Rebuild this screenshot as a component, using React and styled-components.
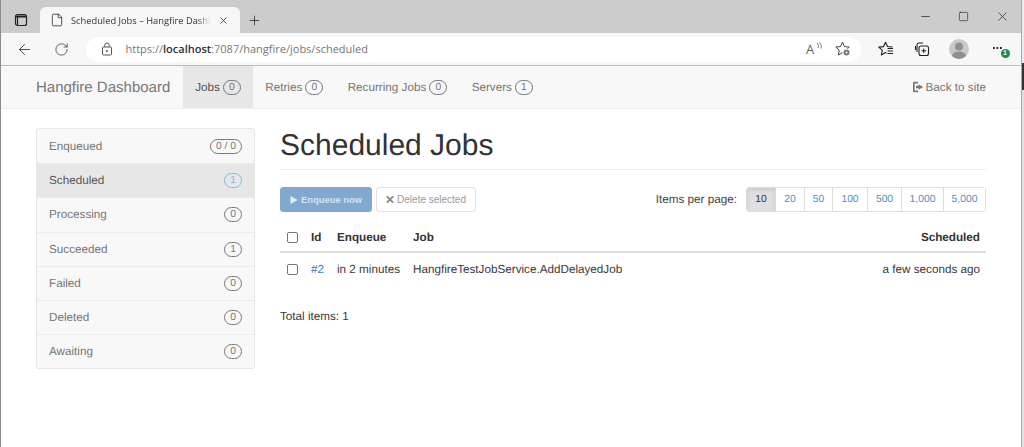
import React from "react";
import styled, { createGlobalStyle } from "styled-components";
import { X, Plus, ArrowLeft, RotateCw, File, Minus, Square } from "lucide-react";

const Global = createGlobalStyle`
  html, body { margin: 0; padding: 0; background: #fff; }
  body { font-family: "Liberation Sans", Arial, sans-serif; font-size: 11.7px; color: #3a3a3a; text-rendering: geometricPrecision; }
`;

const Frame = styled.div`
  width: 1024px; height: 447px; display: flex; overflow: hidden; background: #fff;
`;
const Win = styled.div`
  width: 1020px; height: 447px; display: flex; flex-direction: column;
  border-left: 1px solid #8c8c8c; border-right: 1px solid #a8a8a8; flex: none;
`;
const RightGap = styled.div`
  flex: 1; background: linear-gradient(#ececec 0 63px, #333 63px 90px, #e0e0e0 90px 100%);
`;
const TabStrip = styled.div`
  height: 33px; background: #cccccc; display: flex; align-items: flex-end; flex: none;
`;
const TabSquare = styled.div`
  width: 39px; height: 33px; display: flex; align-items: center; justify-content: center; padding-top: 7px; box-sizing: border-box; color: #222;
`;
const Tab = styled.div`
  width: 200px; height: 26px; box-sizing: border-box; background: #f7f7f7; border-radius: 6px 6px 0 0;
  display: flex; align-items: center; padding: 0 11px 0 10px; gap: 7px; color: #222;
`;
const TabTitle = styled.span`
  flex: 1; font-family: "Open Sans", sans-serif; font-size: 9.3px; white-space: nowrap; overflow: hidden; color: #333;
  -webkit-mask-image: linear-gradient(90deg, #000 90%, transparent);
`;
const NewTab = styled.div`
  width: 28px; height: 26px; display: flex; align-items: center; justify-content: center; color: #222;
`;
const WinCtrls = styled.div`
  margin-left: auto; height: 33px; display: flex; align-items: center; gap: 26px; padding-right: 11px; color: #222;
`;
const Toolbar = styled.div`
  height: 32px; flex: none; background: #f7f7f7; border-bottom: 1px solid #bdbdbd; display: flex; align-items: center;
  padding: 0 0 0 14px; box-sizing: content-box;
`;
const NavIcon = styled.div`
  width: 18px; display: flex; justify-content: center; margin-right: ${p => p.$mr || 0}px; color: #333;
`;
const Address = styled.div`
  width: 775px; height: 25px; background: #fff; border-radius: 13px; display: flex; align-items: center;
  padding: 0 10px 0 15px; box-sizing: border-box; flex: none; margin-right: 17px;
`;
const Url = styled.span`
  font-family: "Open Sans", sans-serif; font-size: 11px; color: #777; margin-left: 12.5px; flex: 1;
  b { font-weight: 600; color: #333; }
`;
const AddrIcons = styled.div`
  display: flex; align-items: center; gap: 13px; color: #555;
`;
const ReadAloud = styled.span`
  font-family: "Open Sans", sans-serif; font-size: 13px; color: #666; position: relative; width: 16px; display: block; line-height: 14px;
`;
const ToolIcons = styled.div`
  display: flex; align-items: center; color: #222;
`;
const ToolIcon = styled.svg`
  margin-right: ${p => p.$mr}px; flex: none;
`;
const Avatar = styled.div`
  width: 20px; height: 20px; border-radius: 50%; background: #c9c9c9; overflow: hidden; flex: none; margin-right: 22px;
`;
const More = styled.div`
  position: relative; width: 20px; height: 20px; flex: none; font-size: 12px;
`;
const Dots = styled.span`
  position: absolute; left: 2px; top: 8px; width: 10px; height: 2px; display: block;
  background: radial-gradient(circle at 1px 1px, #222 1px, transparent 1.2px) 0 0 / 3.5px 2px repeat-x;
`;
const Bubble = styled.span`
  position: absolute; left: 9.5px; top: 10px; width: 9px; height: 9px; border-radius: 50%; background: #1f8a4c; color: #fff;
  font-size: 7px; line-height: 9px; text-align: center; font-weight: 700;
`;
const Navbar = styled.div`
  height: 42px; flex: none; background: #f8f8f8; border-bottom: 1px solid #efefef; display: flex; align-items: stretch; padding: 0 35px;
`;
const Brand = styled.div`
  font-size: 15px; color: #777; display: flex; align-items: center; width: 147px; flex: none; white-space: nowrap;
`;
const NavItem = styled.div`
  display: flex; align-items: center; gap: 3px; padding: 0 12.2px; background: ${p => p.$active ? "#e7e7e7" : "transparent"}; white-space: nowrap; color: ${p => p.$active ? "#555" : "#777"};
`;
const Pill = styled.span`
  display: inline-block; box-sizing: border-box; min-width: 18px; height: 15px; line-height: 13px; padding: 0 5px; border-radius: 8px;
  border: 1px solid ${p => p.$color || "#777"}; color: ${p => p.$color || "#777"}; font-size: 10.3px; text-align: center; background: transparent;
`;
const BackLink = styled.div`
  margin-left: auto; display: flex; align-items: center; gap: 2px; color: #777;
`;
const Body = styled.div`
  flex: 1; display: flex; gap: 25px; padding: 19px 35px 0; align-items: flex-start;
`;
const Side = styled.div`
  width: 219px; flex: none; box-sizing: border-box; border: 1px solid #e7e7e7; border-radius: 3px; background: #f8f8f8; overflow: hidden;
`;
const SideItem = styled.div`
  height: 34.2px; box-sizing: border-box; padding: 0 12px; display: flex; align-items: center; justify-content: space-between;
  color: ${p => p.$active ? "#555" : "#777"}; background: ${p => p.$active ? "#e7e7e7" : "transparent"};
  border-top: ${p => p.$first ? "none" : "1px solid #ececec"};
`;
const Main = styled.div`
  width: 706px; flex: none; padding-top: 1px;
`;
const Title = styled.h1`
  margin: 0; font-size: 30px; line-height: 34px; font-weight: 400; color: #333; padding: 0 0 6px; border-bottom: 1px solid #eee;
`;
const Actions = styled.div`
  display: flex; align-items: center; margin-top: 17px; height: 25px;
`;
const Btn = styled.button`
  width: ${p => p.$w}px; height: 25px; box-sizing: border-box; font-family: inherit; border-radius: 3px; padding: 0 9px; display: flex; align-items: center; gap: 3px; margin-right: 4px; white-space: nowrap; flex: none;
  font-size: ${p => p.$primary ? 9.4 : 10}px;
  background: ${p => p.$primary ? "#81a9ce" : "#fff"}; color: ${p => p.$primary ? "#d5e4f1" : "#9a9a9a"};
  border: 1px solid ${p => p.$primary ? "#81a9ce" : "#e2e2e2"};
  font-weight: ${p => p.$primary ? 700 : 400};
`;
const PerPage = styled.span`
  margin-left: auto; margin-right: 9px; color: #444;
`;
const Pager = styled.div`
  display: flex; height: 25px; box-sizing: border-box; border: 1px solid #ddd; border-radius: 3px; overflow: hidden; width: 240px; flex: none;
`;
const Page = styled.div`
  width: ${p => p.$w}px; flex: none; box-sizing: border-box; display: flex; align-items: center; justify-content: center; font-size: 10.3px;
  color: ${p => p.$on ? "#333" : "#4d92c6"}; background: ${p => p.$on ? "#e0e0e0" : "#fff"};
  border-right: ${p => p.$last ? "none" : "1px solid #ddd"};
  box-shadow: ${p => p.$on ? "inset 0 2px 4px rgba(0,0,0,.1)" : "none"};
`;
const Table = styled.table`
  width: 100%; border-collapse: collapse; table-layout: fixed; margin-top: 10px;
`;
const Th = styled.th`
  height: 30px; padding: ${p => p.$right ? "2px 6px 0 7px" : "2px 7px 0"}; box-sizing: border-box; text-align: ${p => p.$right ? "right" : "left"}; font-size: 11.7px; font-weight: 700; color: #333; border-bottom: 2px solid #ddd; white-space: nowrap;
`;
const Td = styled.td`
  height: 32px; padding: ${p => p.$right ? "2px 6px 0 7px" : "2px 7px 0"}; box-sizing: border-box; text-align: ${p => p.$right ? "right" : "left"}; color: #3a3a3a; white-space: nowrap;
`;
const Check = styled.span`
  display: block; width: 11px; height: 11px; box-sizing: border-box; border: 1px solid #767676; border-radius: 2px; background: #fff;
`;
const IdLink = styled.span`
  color: #337ab7;
`;
const Total = styled.div`
  margin-top: 26px; color: #3a3a3a; line-height: 14px;
`;

const items = [["Enqueued", "0 / 0"], ["Scheduled", "1"], ["Processing", "0"], ["Succeeded", "1"], ["Failed", "0"], ["Deleted", "0"], ["Awaiting", "0"]];
const pages = [["10", 29], ["20", 29], ["50", 28], ["100", 35], ["500", 34], ["1,000", 42], ["5,000", 41]];
const STAR = "M7.5 1.2 L9.5 5.6 L14.2 6.1 L10.7 9.3 L11.7 14 L7.5 11.6 L3.3 14 L4.3 9.3 L0.8 6.1 L5.5 5.6 Z";

export default function App() {
  return (
    <Frame>
      <Global />
      <Win>
        <TabStrip>
          <TabSquare>
            <svg width="14" height="14" viewBox="0 0 14 14" fill="none" stroke="#222"><rect x="1.5" y="1.5" width="11" height="11" rx="2" strokeWidth="1.2" /><path d="M2 3.5h10" strokeWidth="2" /><path d="M3.5 3v9" strokeWidth="1.2" /></svg>
          </TabSquare>
          <Tab>
            <File size={14} strokeWidth={1.3} />
            <TabTitle>Scheduled Jobs – Hangfire Dashboard</TabTitle>
            <X size={11} strokeWidth={1.6} />
          </Tab>
          <NewTab><Plus size={15} strokeWidth={1.2} /></NewTab>
          <WinCtrls>
            <Minus size={13} strokeWidth={1.3} />
            <Square size={11} strokeWidth={1.4} />
            <X size={15} strokeWidth={1.1} />
          </WinCtrls>
        </TabStrip>
        <Toolbar>
          <NavIcon $mr={19}><ArrowLeft size={17} strokeWidth={1.2} /></NavIcon>
          <NavIcon $mr={16}><RotateCw size={15} strokeWidth={1.2} /></NavIcon>
          <Address>
            <svg width="12" height="14" viewBox="0 0 12 14" fill="none" stroke="#555" strokeWidth="1"><rect x="1.5" y="5" width="9" height="8" rx="1" /><path d="M3.8 5V3.2a2.2 2.2 0 0 1 4.4 0V5" /><circle cx="6" cy="9" r=".6" fill="#555" /></svg>
            <Url>https://<b>localhost</b>:7087/hangfire/jobs/scheduled</Url>
            <AddrIcons>
              <ReadAloud>A<svg width="7" height="9" viewBox="0 0 7 9" fill="none" stroke="#777" style={{position:"absolute",left:10,top:0}}><path d="M1 1q2.5 2.5 1 5M3.5 0.5q3 3 1.5 6" /></svg></ReadAloud>
              <svg width="16" height="16" viewBox="0 0 16 16" fill="none" stroke="#444" strokeWidth="1"><path d={STAR} strokeLinejoin="round" /><circle cx="11.5" cy="11.5" r="4" fill="#fff" stroke="none" /><circle cx="11.5" cy="11.5" r="3" fill="#777" stroke="none" /><circle cx="11.5" cy="11.5" r="1" fill="#fff" stroke="none" /></svg>
            </AddrIcons>
          </Address>
          <ToolIcons>
            <ToolIcon $mr={20} width="16" height="16" viewBox="0 0 16 16" fill="none" stroke="#222" strokeWidth="1.1" strokeLinejoin="round"><path d={STAR} /><rect x="8.5" y="6.5" width="7.5" height="8.5" fill="#f7f7f7" stroke="none" /><path d="M9.5 7.5h5.5M9.5 10h5.5M9.5 12.5h5.5" /></ToolIcon>
            <ToolIcon $mr={19} width="16" height="16" viewBox="0 0 16 16" fill="none" stroke="#222" strokeWidth="1.1"><path d="M3 11V4a2 2 0 0 1 2-2h4" /><path d="M1.5 9V5" /><rect x="5" y="5" width="9.5" height="9.5" rx="2" /><path d="M9.7 7.5v4.5M7.5 9.7h4.5" /></ToolIcon>
            <Avatar>
              <svg width="20" height="20" viewBox="0 0 20 20" fill="#8f8f8f"><circle cx="10" cy="7.5" r="4" /><ellipse cx="10" cy="17" rx="7" ry="4.5" /></svg>
            </Avatar>
            <More><Dots /><Bubble>1</Bubble></More>
          </ToolIcons>
        </Toolbar>
        <Navbar>
          <Brand>Hangfire Dashboard</Brand>
          <NavItem $active>Jobs <Pill>0</Pill></NavItem>
          <NavItem>Retries <Pill>0</Pill></NavItem>
          <NavItem>Recurring Jobs <Pill>0</Pill></NavItem>
          <NavItem>Servers <Pill>1</Pill></NavItem>
          <BackLink>
            <svg width="12" height="12" viewBox="0 0 12 12" fill="#777"><path d="M1 1.5A1 1 0 0 1 2 .8h4v1.7H2.7v7H6v1.7H2a1 1 0 0 1-1-1z" /><path d="M6.5 3.2L11.2 6 6.5 8.8V7.2H4V4.8h2.5z" /></svg>
            Back to site
          </BackLink>
        </Navbar>
        <Body>
          <Side>
            {items.map(([n, c], i) => (
              <SideItem key={n} $first={i === 0} $active={i === 1}>
                {n}
                <Pill $color={i === 1 ? "#7cc0dc" : undefined}>{c}</Pill>
              </SideItem>
            ))}
          </Side>
          <Main>
            <Title>Scheduled Jobs</Title>
            <Actions>
              <Btn $primary $w={92}>
                <svg width="9" height="10" viewBox="0 0 9 10" fill="#e4edf5"><path d="M0.5 0.5L8.5 5l-8 4.5z" /></svg>
                Enqueue now
              </Btn>
              <Btn $w={100}>
                <svg width="9" height="9" viewBox="0 0 9 9" stroke="#888" strokeWidth="2.2"><path d="M1 1l7 7M8 1L1 8" /></svg>
                Delete selected
              </Btn>
              <PerPage>Items per page:</PerPage>
              <Pager>
                {pages.map(([p, w], i) => (
                  <Page key={p} $w={w} $on={i === 0} $last={i === pages.length - 1}>{p}</Page>
                ))}
              </Pager>
            </Actions>
            <Table>
              <colgroup>
                <col style={{ width: 24 }} /><col style={{ width: 26 }} /><col style={{ width: 76 }} /><col /><col style={{ width: 120 }} />
              </colgroup>
              <thead>
                <tr>
                  <Th><Check /></Th><Th>Id</Th><Th>Enqueue</Th><Th>Job</Th><Th $right>Scheduled</Th>
                </tr>
              </thead>
              <tbody>
                <tr>
                  <Td><Check /></Td>
                  <Td><IdLink>#2</IdLink></Td>
                  <Td>in 2 minutes</Td>
                  <Td>HangfireTestJobService.AddDelayedJob</Td>
                  <Td $right>a few seconds ago</Td>
                </tr>
              </tbody>
            </Table>
            <Total>Total items: 1</Total>
          </Main>
        </Body>
      </Win>
      <RightGap />
    </Frame>
  );
}
